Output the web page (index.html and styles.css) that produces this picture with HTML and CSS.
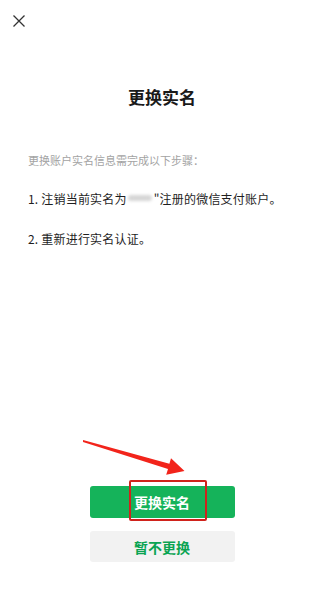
FILE: index.html
```html
<!DOCTYPE html>
<html lang="zh-CN">
<head>
<meta charset="utf-8">
<title>更换实名</title>
<link rel="stylesheet" href="styles.css">
</head>
<body>
<div class="page">
  <div class="topbar">
    <svg class="close" width="12" height="12" viewBox="0 0 12 12" aria-label="关闭">
      <path d="M0.5 0.5 L11.5 11.5 M11.5 0.5 L0.5 11.5" stroke="#333" stroke-width="1.3" fill="none"/>
    </svg>
  </div>
  <h1 class="title">更换实名</h1>
  <p class="intro">更换账户实名信息需完成以下步骤：</p>
  <p class="step">1. 注销当前实名为<span class="masked"></span>"注册的微信支付账户。</p>
  <p class="step step-second">2. 重新进行实名认证。</p>
  <div class="actions">
    <button class="btn btn-primary">更换实名</button>
    <button class="btn btn-secondary">暂不更换</button>
    <div class="highlight"></div>
  </div>
  <svg class="arrow" width="306" height="594" viewBox="0 0 306 594">
    <polygon points="83,440 169.4,463.8 171,458.3 184.5,471 166.2,474.7 168,469 83,442" fill="#f2241b"/>
  </svg>
</div>
</body>
</html>
```
FILE: styles.css
```css
html, body {
  margin: 0;
  padding: 0;
  background: #ffffff;
}

body {
  font-family: "Noto Sans CJK SC", "Noto Sans", "Liberation Sans", sans-serif;
  color: #1a1a1a;
}

.page {
  position: relative;
  width: 306px;
  height: 594px;
  box-sizing: border-box;
  padding: 0 10px 0 28px;
  overflow: hidden;
}

.topbar {
  height: 27px;
  padding-top: 15px;
  box-sizing: border-box;
  margin-left: -15px;
}

.close {
  display: block;
}

.title {
  margin: 58px 0 0;
  font-size: 17px;
  line-height: 24px;
  font-weight: 700;
  text-align: center;
  color: #1a1a1a;
}

.intro {
  margin: 43px 0 0;
  font-size: 11px;
  line-height: 16px;
  color: #a3a3a3;
}

.step {
  margin: 22px 0 0;
  font-size: 12px;
  line-height: 18px;
  color: #1e1e1e;
  letter-spacing: 0.2px;
}

.step-second {
  margin-top: 22px;
}

.masked {
  display: inline-block;
  width: 24px;
  height: 6px;
  margin: 0 2px 0 1px;
  vertical-align: 3px;
  background: #d6d6d6;
  border-radius: 3px;
  filter: blur(1.5px);
}

.actions {
  position: relative;
  width: 145px;
  margin: 238px auto 0;
  display: flex;
  flex-direction: column;
  gap: 13px;
}

.btn {
  display: block;
  width: 100%;
  border: 0;
  border-radius: 3px;
  font-family: inherit;
  font-size: 14px;
  font-weight: 700;
  padding: 0;
  cursor: pointer;
}

.btn-primary {
  height: 32px;
  background: #15b35a;
  color: #ffffff;
}

.btn-secondary {
  height: 31px;
  background: #f2f2f2;
  color: #0aa452;
}

.highlight {
  position: absolute;
  left: 39px;
  top: -6px;
  width: 78px;
  height: 41px;
  box-sizing: border-box;
  border: 2px solid #d0231c;
  border-radius: 2px;
}

.arrow {
  position: absolute;
  left: 0;
  top: 0;
  pointer-events: none;
}
```
